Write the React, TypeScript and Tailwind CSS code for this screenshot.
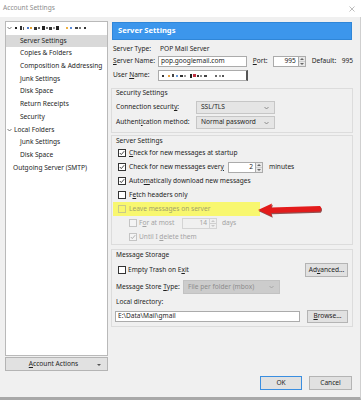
import React from "react";

// redacted (pixelated) text: [width, marginLeft, height, colour]
type Blob = [number, number, number, string];

const ACCOUNT_BLUR: Blob[] = [
  [2, 0, 2, "#222"], [2, 3, 4, "#333"], [1, 1, 3, "#555"], [2, 3, 2, "#4a78c8"],
  [2, 1, 2, "#e0a030"], [3, 2, 3, "#333"], [2, 1, 2, "#666"], [3, 2, 4, "#222"],
  [2, 1, 2, "#777"], [3, 1, 3, "#333"], [2, 1, 2, "#999"], [3, 1, 4, "#222"],
  [2, 7, 2, "#f0b040"], [2, 2, 2, "#5a8ad8"], [3, 3, 2, "#444"], [2, 1, 2, "#777"],
  [2, 3, 2, "#333"],
];

const USER_BLUR: Blob[] = [
  [2, 0, 2, "#333"], [2, 4, 2, "#e8a040"], [2, 2, 3, "#444"], [2, 2, 2, "#6a9ad8"],
  [3, 2, 2, "#333"], [2, 1, 2, "#999"], [2, 4, 4, "#222"], [3, 1, 3, "#c03040"],
  [2, 1, 2, "#333"], [2, 1, 2, "#888"], [3, 2, 2, "#444"], [2, 8, 2, "#666"],
  [2, 2, 2, "#999"], [2, 1, 2, "#555"],
];

function Blur({ blobs }: { blobs: Blob[] }) {
  return (
    <span className="flex items-center h-[5px]">
      {blobs.map(([w, ml, h, c], i) => (
        <span key={i} style={{ width: w, marginLeft: ml, height: h, background: c }} />
      ))}
    </span>
  );
}

function Chevron({ color = "#555" }: { color?: string }) {
  return (
    <svg width="5" height="4" viewBox="0 0 5 4" className="shrink-0">
      <polyline points="0.5,1 2.5,3 4.5,1" fill="none" stroke={color} strokeWidth="0.8" />
    </svg>
  );
}

function Check({
  checked = false,
  disabled = false,
  yellow = false,
}: {
  checked?: boolean;
  disabled?: boolean;
  yellow?: boolean;
}) {
  const box = yellow
    ? "border-[#c9c98a] bg-[#f8f76f]"
    : disabled
    ? "border-[#c4c4c4] bg-[#f4f4f4]"
    : "border-[#333333] bg-white";
  return (
    <span className={`w-[8px] h-[8px] border shrink-0 flex items-center justify-center ${box}`}>
      {checked && (
        <svg width="6" height="6" viewBox="0 0 6 6">
          <polyline
            points="0.8,3 2.3,4.6 5.2,1.2"
            fill="none"
            stroke={disabled ? "#a8a8a8" : "#333"}
            strokeWidth="0.9"
          />
        </svg>
      )}
    </span>
  );
}

function Spinner({ disabled = false }: { disabled?: boolean }) {
  const c = disabled ? "#c8c8c8" : "#666";
  return (
    <div
      className={`w-[7px] h-full border border-l-0 flex flex-col ${
        disabled ? "border-[#d4d4d4] bg-[#f0f0f0]" : "border-[#ababab] bg-[#e8e8e8]"
      }`}
    >
      <div className="flex-1 flex items-center justify-center border-b border-[#cfcfcf]">
        <svg width="4" height="2" viewBox="0 0 4 2">
          <polygon points="0,2 2,0 4,2" fill={c} />
        </svg>
      </div>
      <div className="flex-1 flex items-center justify-center">
        <svg width="4" height="2" viewBox="0 0 4 2">
          <polygon points="0,0 2,2 4,0" fill={c} />
        </svg>
      </div>
    </div>
  );
}

function Select({ text, className, disabled = false }: { text: string; className: string; disabled?: boolean }) {
  return (
    <div
      className={`${className} flex items-center justify-between border pl-[4px] pr-[5px] ${
        disabled ? "bg-[#cccccc] border-[#c2c2c2] text-[#8d8d8d]" : "bg-[#e5e5e5] border-[#c6c6c6]"
      }`}
    >
      <span>{text}</span>
      <Chevron color={disabled ? "#a0a0a0" : "#777"} />
    </div>
  );
}

function Button({ children, className }: { children: React.ReactNode; className: string }) {
  return (
    <div className={`${className} flex items-center justify-center bg-[#e1e1e1] border border-[#b4b4b4]`}>
      {children}
    </div>
  );
}

const TREE: { label: string; level: number; chevron?: boolean; selected?: boolean }[] = [
  { label: "Server Settings", level: 1, selected: true },
  { label: "Copies & Folders", level: 1 },
  { label: "Composition & Addressing", level: 1 },
  { label: "Junk Settings", level: 1 },
  { label: "Disk Space", level: 1 },
  { label: "Return Receipts", level: 1 },
  { label: "Security", level: 1 },
  { label: "Local Folders", level: 0, chevron: true },
  { label: "Junk Settings", level: 1 },
  { label: "Disk Space", level: 1 },
  { label: "Outgoing Server (SMTP)", level: 0 },
];

export default function App() {
  return (
    <div className="w-[363px] h-[400px] bg-white flex flex-col overflow-hidden whitespace-nowrap font-['Noto_Sans',sans-serif] text-[6.6px] leading-none text-[#1e1e1e]">
      {/* title bar */}
      <div className="h-[17px] shrink-0 flex items-center justify-between pl-[3px] pr-[8px]">
        <span className="text-[#8c8c8c]">Account Settings</span>
        <svg width="6" height="6" viewBox="0 0 6 6">
          <path d="M0.5,0.5 L5.5,5.5 M5.5,0.5 L0.5,5.5" stroke="#a0a0a0" strokeWidth="0.7" />
        </svg>
      </div>

      <div className="flex-1 w-[361px] bg-[#f0f0f0] border-r border-r-[#cfcfcf] border-b-[3px] border-b-[#a8a8a8] flex flex-col">
        <div className="flex pt-[4px]">
          {/* account tree */}
          <div className="ml-[5px] w-[103px] flex flex-col">
            <div className="h-[335px] border border-[#b9b9b9] bg-white flex flex-col">
              <div className="h-[12.7px] flex items-center pl-[1px] gap-[3px]">
                <Chevron />
                <Blur blobs={ACCOUNT_BLUR} />
              </div>
              {TREE.map((row, i) => (
                <div
                  key={i}
                  className={`h-[12.7px] flex items-center ${row.selected ? "bg-[#d9d9d9]" : ""} ${
                    row.level === 1 ? "pl-[14px]" : row.chevron ? "pl-[1px] gap-[2px]" : "pl-[7px]"
                  }`}
                >
                  {row.chevron && <Chevron />}
                  <span>{row.label}</span>
                </div>
              ))}
            </div>
            <Button className="mt-[1px] h-[14px] relative">
              <span className="mr-[6px]">
                <u>A</u>ccount Actions
              </span>
              <svg width="4" height="2" viewBox="0 0 4 2" className="absolute right-[6px] top-[6px]">
                <polygon points="0,0 2,2 4,0" fill="#555" />
              </svg>
            </Button>
          </div>

          {/* server settings pane */}
          <div className="ml-[3px] w-[242px] flex flex-col">
            <div className="mt-[1px] ml-[1px] w-[240px] h-[18px] bg-[#3c96ec] border border-[#2f86d8] flex items-center pl-[5px] text-white font-bold text-[7.6px]">
              Server Settings
            </div>

            <div className="flex h-[10px] items-center mt-[4px] pl-[2px]">
              <span className="w-[45px]">Server Type:</span>
              <span className="pl-[2px]">POP Mail Server</span>
            </div>

            <div className="flex h-[11px] items-center mt-[2px] pl-[2px]">
              <span className="w-[45px]">
                <u>S</u>erver Name:
              </span>
              <div className="w-[89px] h-[11px] border border-[#ababab] bg-white flex items-center pl-[2px]">
                pop.googlemail.com
              </div>
              <span className="ml-[6px] w-[20px]">
                <u>P</u>ort:
              </span>
              <div className="flex h-[11px]">
                <div className="w-[26px] h-full border border-[#ababab] bg-white flex items-center justify-end pr-[2px]">
                  995
                </div>
                <Spinner />
              </div>
              <span className="ml-[6px] w-[30px]">Default:</span>
              <span>995</span>
            </div>

            <div className="flex h-[11px] items-center mt-[3px] pl-[2px]">
              <span className="w-[45px]">
                User <u>N</u>ame:
              </span>
              <div className="w-[90px] h-[11px] border border-[#ababab] border-r-2 border-r-[#555] bg-white flex items-center pl-[3px]">
                <Blur blobs={USER_BLUR} />
              </div>
            </div>

            {/* security settings */}
            <div className="mt-[7px] border border-[#dcdcdc] flex flex-col px-[4px] pb-[3px]">
              <span className="h-[8px] leading-[8px]">Security Settings</span>
              <div className="flex items-center h-[13px] mt-[4px]">
                <span className="w-[80px]">
                  Connection securit<u>y</u>:
                </span>
                <Select className="w-[79px] h-[13px]" text="SSL/TLS" />
              </div>
              <div className="flex items-center h-[13px] mt-[2px]">
                <span className="w-[80px]">
                  Authent<u>i</u>cation method:
                </span>
                <Select className="w-[79px] h-[13px]" text="Normal password" />
              </div>
            </div>

            {/* server settings */}
            <div className="relative mt-[2px] border border-[#dcdcdc] flex flex-col">
              <span className="h-[10px] flex items-center pl-[4px]">Server Settings</span>
              <div className="h-[14px] flex items-center pl-[6px] gap-[3px]">
                <Check checked />
                <span>
                  <u>C</u>heck for new messages at startup
                </span>
              </div>
              <div className="h-[14px] flex items-center pl-[6px] gap-[3px]">
                <Check checked />
                <span className="w-[99px]">
                  Check for new messages ever<u>y</u>
                </span>
                <div className="flex h-[11px] -ml-[3px]">
                  <div className="w-[28px] h-full border border-[#ababab] bg-white flex items-center justify-end pr-[2px]">
                    2
                  </div>
                  <Spinner />
                </div>
                <span className="ml-[3px]">minutes</span>
              </div>
              <div className="h-[14px] flex items-center pl-[6px] gap-[3px]">
                <Check checked />
                <span>
                  Auto<u>m</u>atically download new messages
                </span>
              </div>
              <div className="h-[14px] flex items-center pl-[6px] gap-[3px]">
                <Check />
                <span>
                  F<u>e</u>tch headers only
                </span>
              </div>
              <div className="h-[14px] ml-[1px] w-[147px] bg-[#f8f76f] flex items-center pl-[5px] gap-[3px]">
                <Check yellow />
                <span className="text-[#a3a36a]">Leave messages on server</span>
              </div>
              <div className="h-[14px] flex items-center pl-[17px] gap-[2px] text-[#a3a3a3]">
                <Check disabled />
                <span className="w-[43px]">
                  F<u>o</u>r at most
                </span>
                <div className="flex h-[11px] -ml-[2px]">
                  <div className="w-[28px] h-full border border-[#d4d4d4] bg-[#f0f0f0] flex items-center justify-end pr-[2px]">
                    14
                  </div>
                  <Spinner disabled />
                </div>
                <span className="ml-[3px]">days</span>
              </div>
              <div className="h-[14px] flex items-center pl-[17px] gap-[2px] text-[#a3a3a3]">
                <Check checked disabled />
                <span>
                  Until I <u>d</u>elete them
                </span>
              </div>

              {/* red annotation arrow */}
              <svg width="70" height="20" viewBox="0 0 70 20" className="absolute left-[144px] top-[65px]">
                <path
                  d="M2.8,10.2 L16.8,3.7 L15.8,7.7 L64.8,6.2 Q67.3,8.7 64.8,11.7 L15.8,13.2 L16.8,16.7 Z"
                  fill="#6e0a0a"
                  opacity="0.7"
                />
                <path
                  d="M2,9 L16,2.5 L15,6.5 L64,5 Q66.5,7.5 64,10.5 L15,12 L16,15.5 Z"
                  fill="#e31b1b"
                />
              </svg>
            </div>

            {/* message storage */}
            <div className="mt-[4px] border border-[#dcdcdc] flex flex-col pb-[3px]">
              <span className="h-[10px] flex items-center pl-[4px]">Message Storage</span>
              <div className="h-[14px] mt-[3px] flex items-center pl-[6px] pr-[4px] gap-[2px]">
                <Check />
                <span>
                  Empty Trash on E<u>x</u>it
                </span>
                <Button className="ml-auto w-[43px] h-[14px]">
                  <span>
                    Ad<u>v</u>anced...
                  </span>
                </Button>
              </div>
              <div className="h-[14px] mt-[3px] flex items-center pl-[4px]">
                <span className="w-[67px]">
                  Message Store <u>T</u>ype:
                </span>
                <Select className="w-[97px] h-[14px]" text="File per folder (mbox)" disabled />
              </div>
              <span className="h-[10px] mt-[3px] flex items-center pl-[4px]">Local directory:</span>
              <div className="h-[13px] mt-[3px] flex items-center pl-[3px] pr-[4px]">
                <div className="w-[185px] h-[11px] border border-[#ababab] bg-white flex items-center pl-[2px]">
                  E:\Data\Mail\gmail
                </div>
                <Button className="ml-auto w-[41px] h-[13px]">
                  <span>
                    <u>B</u>rowse...
                  </span>
                </Button>
              </div>
            </div>
          </div>
        </div>

        {/* dialog buttons */}
        <div className="mt-[5px] flex justify-end pr-[8px] gap-[7px]">
          <div className="w-[42px] h-[14px] flex items-center justify-center bg-[#e1e1e1] border border-[#3a8ee0]">
            OK
          </div>
          <Button className="w-[43px] h-[14px]">Cancel</Button>
        </div>
      </div>
    </div>
  );
}
